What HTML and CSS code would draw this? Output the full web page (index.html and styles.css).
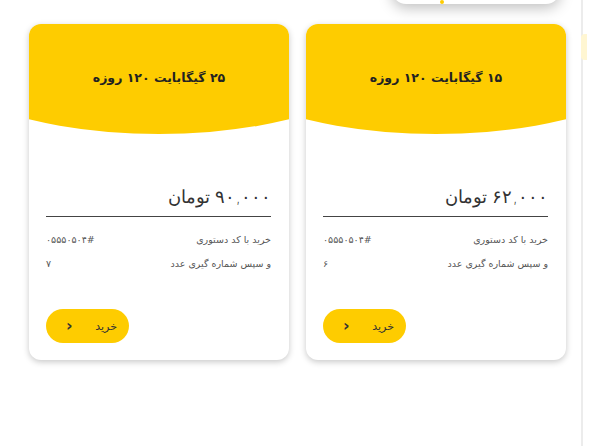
FILE: index.html
```html
<!DOCTYPE html>
<html lang="fa" dir="rtl">
<head>
<meta charset="utf-8">
<link rel="stylesheet" href="styles.css">
</head>
<body>
<div class="page">
  <aside class="side"><div class="side-mark"></div></aside>
  <main class="main">
    <div class="topbar"><div class="pill"><span class="pill-dot"></span></div></div>
    <div class="cards">
      <div class="card">
        <div class="head">۱۵ گیگابایت ۱۲۰ روزه</div>
        <div class="body">
          <div class="price">۶۲,۰۰۰ تومان</div>
          <div class="row first"><span>خرید با کد دستوری</span><span class="val" dir="ltr">۰۵۵۵۰۵۰۴#</span></div>
          <div class="row"><span>و سپس شماره گیری عدد</span><span class="val">۶</span></div>
          <button class="buy"><span>خرید</span><span class="chev">‹</span></button>
        </div>
      </div>
      <div class="card">
        <div class="head">۲۵ گیگابایت ۱۲۰ روزه</div>
        <div class="body">
          <div class="price">۹۰,۰۰۰ تومان</div>
          <div class="row first"><span>خرید با کد دستوری</span><span class="val" dir="ltr">۰۵۵۵۰۵۰۴#</span></div>
          <div class="row"><span>و سپس شماره گیری عدد</span><span class="val">۷</span></div>
          <button class="buy"><span>خرید</span><span class="chev">‹</span></button>
        </div>
      </div>
    </div>
  </main>
</div>
</body>
</html>
```
FILE: styles.css
```css
* { box-sizing: border-box; }
html, body { margin: 0; padding: 0; background: #fff; }
body { font-family: "DejaVu Sans", sans-serif; color: #333; width: 600px; height: 446px; overflow: hidden; }
.page { display: flex; height: 446px; }
.side { width: 19px; border-left: 2px solid #ececec; }
.side-mark { width: 6px; height: 26px; margin-top: 34px; margin-right: 13px; background: #fff6d2; border-radius: 4px 0 0 4px; }
.main { width: 581px; padding: 0 15px 0 29px; }
.topbar { height: 24px; display: flex; justify-content: flex-start; padding-right: 6px; }
.pill { width: 168px; height: 30px; margin-top: -26px; background: #fff; border-radius: 14px; box-shadow: 0 4px 14px rgba(0,0,0,0.25); display: flex; align-items: flex-end; justify-content: flex-end; padding-left: 48px; }
.pill-dot { width: 4px; height: 4px; background: #fecc00; border-radius: 2px; }
.cards { display: flex; gap: 17px; }
.card { width: 260px; height: 336px; background: #fff; border-radius: 12px; overflow: hidden; box-shadow: 0 2px 6px rgba(0,0,0,0.22); }
.head { height: 110px; background: #fecc00; clip-path: ellipse(100% 110px at 50% 0); display: flex; justify-content: center; padding-top: 46px; font-weight: bold; font-size: 12.5px; color: #222; }
.body { padding: 50px 18px 0 17px; }
.price { font-size: 17.5px; font-weight: 300; color: #333; padding-bottom: 6px; border-bottom: 1px solid #444; line-height: 26px; }
.row { display: flex; justify-content: space-between; font-size: 9.5px; color: #555; height: 24px; align-items: center; }
.row.first { margin-top: 10px; }
.val { min-width: 59px; text-align: left; }
.buy { margin-top: 34px; margin-right: auto; width: 83px; height: 34px; border: none; border-radius: 17px; background: #fecc00; display: flex; align-items: center; justify-content: space-between; padding: 0 12px 0 20px; font-family: inherit; font-size: 11px; color: #333; }
.chev { font-size: 16px; line-height: 1; font-weight: bold; }
```
